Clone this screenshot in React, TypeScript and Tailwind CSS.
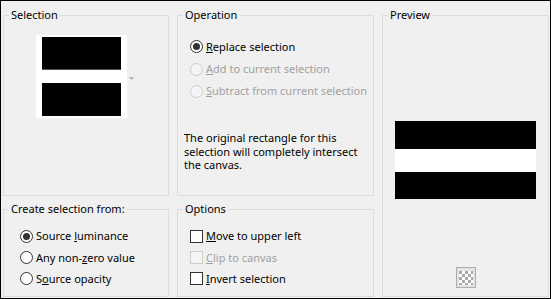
import React from 'react';

const font = { fontFamily: '"Noto Sans", "Open Sans", sans-serif' };

const Group: React.FC<{ title: string; className?: string; children?: React.ReactNode }> = ({ title, className = '', children }) => (
  <div className={`flex flex-col border border-[#dcdcdc] ${className}`}>
    <div className="-mt-[9px] ml-[5px] w-fit whitespace-nowrap bg-[#f0f0f0] px-[2px] text-[11px] leading-[16px] text-black">{title}</div>
    {children}
  </div>
);

const Radio: React.FC<{ checked?: boolean; disabled?: boolean }> = ({ checked, disabled }) => (
  <span
    className={`flex h-[13px] w-[13px] shrink-0 items-center justify-center rounded-full border ${
      disabled ? 'border-[#cccccc] bg-[#f5f5f5]' : 'border-[#333333] bg-white'
    }`}
  >
    {checked && <span className="h-[7px] w-[7px] rounded-full bg-[#333333]" />}
  </span>
);

const Check: React.FC<{ disabled?: boolean }> = ({ disabled }) => (
  <span
    className={`h-[13px] w-[13px] shrink-0 border ${disabled ? 'border-[#cccccc] bg-[#f5f5f5]' : 'border-[#333333] bg-white'}`}
  />
);

const Row: React.FC<{ control: React.ReactNode; disabled?: boolean; children: React.ReactNode; h?: string }> = ({
  control,
  disabled,
  children,
  h = 'h-[22px]',
}) => (
  <div className={`flex items-center gap-[3px] whitespace-nowrap ${h} text-[11px] ${disabled ? 'text-[#a0a0a0]' : 'text-black'}`}>
    {control}
    <span className="leading-[16px]">{children}</span>
  </div>
);

const Checker = () => (
  <svg width="14" height="14" viewBox="0 0 14 14">
    <rect width="14" height="14" fill="#ffffff" />
    {[0, 1, 2, 3, 4].map((r) =>
      [0, 1, 2, 3, 4].map((c) =>
        (r + c) % 2 === 0 ? <rect key={`${r}-${c}`} x={c * 3} y={r * 3} width="3" height="3" fill="#a8a8a8" /> : null
      )
    )}
  </svg>
);

export default function App() {
  return (
    <div style={font} className="flex h-[299px] w-[551px] gap-[8px] border border-black bg-[#f0f0f0] pb-[1px] pl-[2px] pr-[1px] pt-[14px]">
      {/* left column */}
      <div className="flex w-[166px] flex-col gap-[13px]">
        <Group title="Selection" className="h-[182px]">
          <div className="ml-[32px] mt-[12px] flex items-center gap-[2px]">
            <div className="flex h-[83px] w-[91px] flex-col bg-white px-[6px] pt-[2px]">
              <div className="h-[33px] border-b border-[#505050] bg-black" />
              <div className="h-[13px]" />
              <div className="h-[33px] bg-black" />
            </div>
            <svg width="5" height="3" viewBox="0 0 5 3" className="mt-[3px]">
              <path d="M0 0 H5 L2.5 3 Z" fill="#b0b0b0" />
            </svg>
          </div>
        </Group>
        <Group title="Create selection from:" className="h-[88px]">
          <div className="ml-[16px] mt-[8px] flex flex-col">
            <Row control={<Radio checked />} h="h-[22px]">
              Source <span className="underline">l</span>uminance
            </Row>
            <Row control={<Radio />} h="h-[21px]">
              Any non-<span className="underline">z</span>ero value
            </Row>
            <Row control={<Radio />} h="h-[21px]">
              S<span className="underline">o</span>urce opacity
            </Row>
          </div>
        </Group>
      </div>

      {/* middle column */}
      <div className="flex w-[197px] flex-col gap-[13px]">
        <Group title="Operation" className="h-[181px]">
          <div className="ml-[12px] mt-[12px] flex flex-col">
            <Row control={<Radio checked />} h="h-[23px]">
              <span className="underline">R</span>eplace selection
            </Row>
            <Row control={<Radio disabled />} disabled h="h-[22px]">
              <span className="underline">A</span>dd to current selection
            </Row>
            <Row control={<Radio disabled />} disabled h="h-[22px]">
              <span className="underline">S</span>ubtract from current selection
            </Row>
          </div>
          <p className="ml-[6px] mt-[29px] whitespace-nowrap text-[11px] leading-[13.5px] text-black">
            The original rectangle for this
            <br />
            selection will completely intersect
            <br />
            the canvas.
          </p>
        </Group>
        <Group title="Options" className="h-[88px]">
          <div className="ml-[12px] mt-[8px] flex flex-col">
            <Row control={<Check />} h="h-[22px]">
              <span className="underline">M</span>ove to upper left
            </Row>
            <Row control={<Check disabled />} disabled h="h-[21px]">
              <span className="underline">C</span>lip to canvas
            </Row>
            <Row control={<Check />} h="h-[21px]">
              <span className="underline">I</span>nvert selection
            </Row>
          </div>
        </Group>
      </div>

      {/* preview */}
      <Group title="Preview" className="h-[282px] w-[167px]">
        <div className="mx-auto mt-[98px] flex w-[141px] flex-col">
          <div className="h-[28px] bg-black" />
          <div className="h-[23px] bg-white" />
          <div className="h-[27px] bg-black" />
        </div>
        <div className="mx-auto mb-[8px] mt-auto flex h-[21px] w-[20px] items-center justify-center border border-[#adadad] bg-[#e5e5e5]">
          <Checker />
        </div>
      </Group>
    </div>
  );
}
